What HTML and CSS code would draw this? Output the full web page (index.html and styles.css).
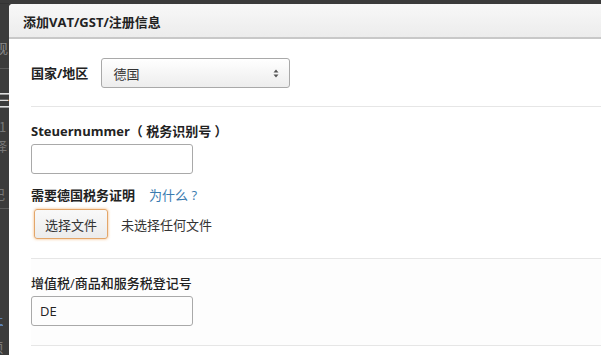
FILE: index.html
```html
<!DOCTYPE html>
<html>
<head>
<meta charset="utf-8">
<link rel="stylesheet" href="styles.css">
</head>
<body>
<div class="screen">
  <div class="backdrop">
    <div class="bd-line bd-top"></div>
    <div class="bd-char bd-c1">现</div>
    <div class="bd-line bd-l1"></div>
    <div class="bd-char bd-menu">三</div>
    <div class="bd-char bd-c2">1</div>
    <div class="bd-char bd-c3">择</div>
    <div class="bd-char bd-c4">记</div>
    <div class="bd-line bd-l2"></div>
    <div class="bd-char bd-c5">址</div>
    <div class="bd-char bd-c6">额</div>
  </div>
  <div class="modal">
    <div class="modal-header">添加VAT/GST/注册信息</div>
    <div class="modal-body">
      <div class="section row-country">
        <label class="label bold">国家/地区</label>
        <div class="select">
          <span>德国</span>
          <svg class="arrows" width="6" height="9" viewBox="0 0 6 9"><path d="M3 0.5 L5.5 3.5 L0.5 3.5 Z M3 8.5 L5.5 5.5 L0.5 5.5 Z" fill="#555"/></svg>
        </div>
      </div>
      <div class="section">
        <div class="label bold">Steuernummer（ 税务识别号 ）</div>
        <div class="input"></div>
        <div class="label bold need">需要德国税务证明<a class="why">为什么 ?</a></div>
        <div class="file-row">
          <button class="file-btn">选择文件</button>
          <span class="file-none">未选择任何文件</span>
        </div>
      </div>
      <div class="section section-alt">
        <div class="label medium">增值税/商品和服务税登记号</div>
        <div class="input">DE</div>
      </div>
      <div class="section"></div>
    </div>
  </div>
</div>
</body>
</html>
```
FILE: styles.css
```css
html, body {
  margin: 0;
  padding: 0;
  height: 100%;
  overflow: hidden;
}
body {
  background: #3b3b3b;
  font-family: "Open Sans", "Noto Sans CJK SC", sans-serif;
  color: #333;
  font-size: 13px;
}
.screen {
  display: flex;
  height: 355px;
  overflow: hidden;
}
.backdrop {
  width: 9px;
  flex: none;
  overflow: hidden;
  color: #8a8a8a;
  font-family: "Noto Sans CJK SC", sans-serif;
  font-size: 13px;
  line-height: 16px;
}
.bd-char {
  width: 20px;
  margin-left: -5px;
}
.bd-line {
  height: 1px;
  background: #5a5a5a;
}
.bd-top { margin-top: 3px; background: #333; }
.bd-c1 { margin-top: 36px; }
.bd-l1 { margin-top: 12px; }
.bd-menu { margin-top: 20px; color: #ddd; font-size: 18px; line-height: 20px; margin-left: -6px; }
.bd-c2 { margin-top: 10px; color: #777; margin-left: -1px; }
.bd-c3 { margin-top: 3px; color: #777; margin-left: -6px; }
.bd-c4 { margin-top: 32px; color: #777; margin-left: -8px; }
.bd-l2 { margin-top: 6px; }
.bd-c5 { margin-top: 102px; color: #5b7fb0; margin-left: -10px; text-decoration: underline; }
.bd-c6 { margin-top: 12px; color: #888; margin-left: -10px; }

.modal {
  flex: 1;
  margin-top: 4px;
  background: #fff;
  border-top-left-radius: 4px;
  overflow: hidden;
}
.modal-header {
  height: 35px;
  box-sizing: border-box;
  padding: 9px 0 0 14px;
  font-weight: 700;
  font-size: 13px;
  line-height: 18px;
  color: #222;
  background: linear-gradient(#f8f8f8, #ececec);
  border-bottom: 2px solid #c8c8c8;
}
.modal-body {
  padding-left: 22px;
}
.section {
  border-bottom: 1px solid #e6e6e6;
  padding: 15px 0 19px;
}
.section-alt {
  background: #fdfdfd;
}
.row-country {
  display: flex;
  align-items: center;
  gap: 13px;
  padding: 19px 0 18px;
}
.label {
  line-height: 18px;
  color: #333;
}
.bold { font-weight: 700; color: #222; }
.medium { font-weight: 500; color: #222; }
.select {
  width: 166px;
  height: 28px;
  border: 1px solid #a9a9a9;
  border-radius: 3px;
  background: linear-gradient(#ffffff, #ededed);
  display: flex;
  align-items: center;
  justify-content: space-between;
  padding: 0 10px 0 11px;
  box-sizing: content-box;
  font-family: "Noto Sans CJK SC", sans-serif;
  color: #333;
}
.input {
  width: 160px;
  height: 28px;
  margin-top: 4px;
  border: 1px solid #a9a9a9;
  border-radius: 3px;
  box-sizing: content-box;
  display: flex;
  align-items: center;
  text-indent: 8px;
  color: #222;
  font-size: 13px;
}
.need {
  margin-top: 12px;
}
.why {
  font-weight: 400;
  color: #3a7bb0;
  margin-left: 14px;
}
.file-row {
  display: flex;
  align-items: center;
  margin-top: 5px;
}
.file-btn {
  margin-left: 3px;
  height: 30px;
  width: 74px;
  border: 1px solid #e3a66a;
  border-radius: 3px;
  background: linear-gradient(#f9f9f9, #ececec);
  box-shadow: 0 0 3px rgba(236, 150, 60, 0.7);
  font-family: "Noto Sans CJK SC", sans-serif;
  font-size: 13px;
  color: #333;
  padding: 0;
}
.file-none {
  margin-left: 13px;
  font-family: "Noto Sans CJK SC", sans-serif;
  color: #333;
}
```
